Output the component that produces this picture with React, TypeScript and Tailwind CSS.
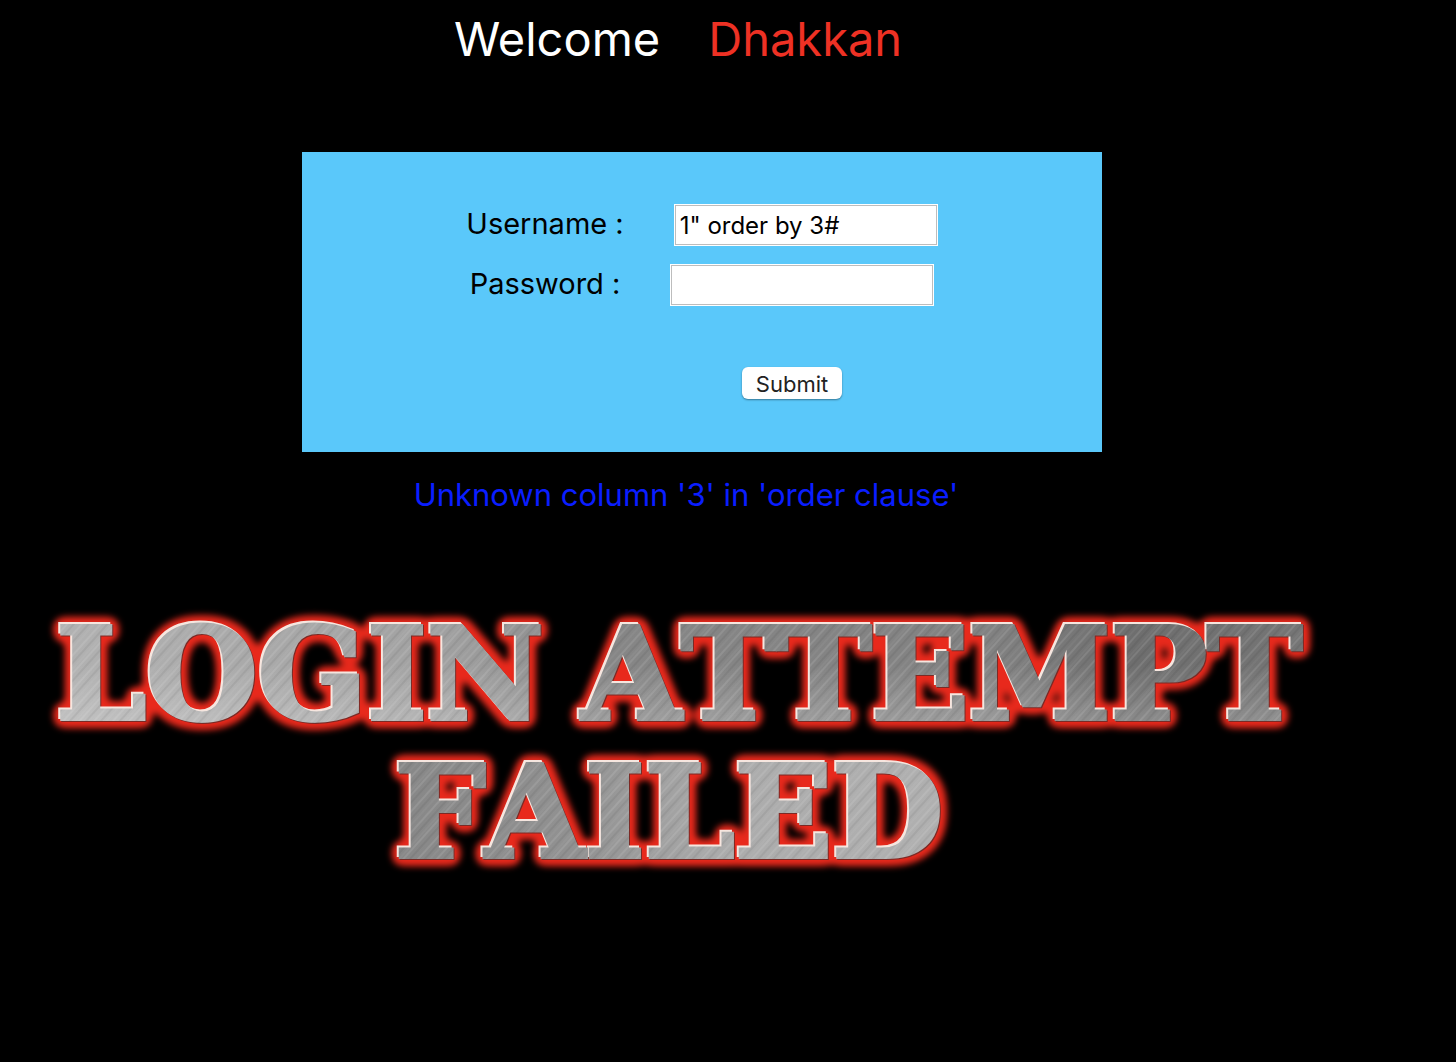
import React from "react";

function Field({ id, label, type, value }: { id: string; label: string; type: string; value: string }) {
  return (
    <div className="flex items-start justify-center gap-[50px]">
      <label htmlFor={id} className="text-[29px] leading-[40px] whitespace-pre">{label}</label>
      <input
        id={id}
        type={type}
        defaultValue={value}
        className="h-[42px] w-[264px] border border-white bg-white px-[5px] text-[24px] text-black outline outline-1 -outline-offset-2 outline-[#bdbdbd]"
      />
    </div>
  );
}

function FailedBanner() {
  return (
    <svg viewBox="0 -40 1456 340" className="block w-full" role="img" aria-label="Login attempt failed">
      <defs>
        <linearGradient id="steelTop" x1="0" x2="1" y1="0" y2="0">
          <stop offset="0" stopColor="#b4b4b4" />
          <stop offset="0.3" stopColor="#a2a2a2" />
          <stop offset="0.42" stopColor="#868686" />
          <stop offset="0.68" stopColor="#828282" />
          <stop offset="0.78" stopColor="#6e6e6e" />
          <stop offset="1" stopColor="#7c7c7c" />
        </linearGradient>
        <linearGradient id="steelBottom" x1="0" x2="1" y1="0" y2="0">
          <stop offset="0.26" stopColor="#868686" />
          <stop offset="0.4" stopColor="#929292" />
          <stop offset="0.5" stopColor="#acacac" />
          <stop offset="0.65" stopColor="#b0b0b0" />
        </linearGradient>
        <linearGradient id="sheen" x1="0" x2="0" y1="0" y2="1">
          <stop offset="0.4" stopColor="#fff" stopOpacity="0" />
          <stop offset="1" stopColor="#fff" stopOpacity="0.2" />
        </linearGradient>
        <pattern id="brush" width="37" height="60" patternUnits="userSpaceOnUse" patternTransform="rotate(42)">
          <path d="M3 0V60M17 0V60M29 0V60" stroke="#fff" strokeOpacity="0.1" strokeWidth="2" />
          <path d="M8 0V60M22 0V60M34 0V60" stroke="#000" strokeOpacity="0.06" strokeWidth="2" />
          <path d="M12 0V60M26 0V60" stroke="#fff" strokeOpacity="0.08" />
        </pattern>
        <pattern id="metal" width="1456" height="300" patternUnits="userSpaceOnUse">
          <rect width="1456" height="140" fill="url(#steelTop)" />
          <rect y="140" width="1456" height="160" fill="url(#steelBottom)" />
          <rect y="26" width="1456" height="96" fill="url(#sheen)" />
          <rect width="1456" height="300" fill="url(#brush)" />
        </pattern>
        <filter id="glow" x="0" y="0" width="1456" height="300" filterUnits="userSpaceOnUse" colorInterpolationFilters="sRGB">
          <feMorphology in="SourceAlpha" operator="dilate" radius="2" result="wide" />
          <feGaussianBlur in="wide" stdDeviation="5" result="soft" />
          <feComponentTransfer in="soft" result="fat">
            <feFuncA type="linear" slope="12" intercept="-1" />
          </feComponentTransfer>
          <feGaussianBlur in="fat" stdDeviation="3" result="halo" />
          <feFlood floodColor="#e8291c" />
          <feComposite in2="halo" operator="in" result="red" />
          <feOffset in="SourceAlpha" dx="-2" dy="-2" result="up" />
          <feFlood floodColor="#f6e6df" />
          <feComposite in2="up" operator="in" result="light" />
          <feOffset in="SourceAlpha" dx="1" dy="1" result="down" />
          <feFlood floodColor="#7c2a25" />
          <feComposite in2="down" operator="in" result="dark" />
          <feMerge>
            <feMergeNode in="red" />
            <feMergeNode in="dark" />
            <feMergeNode in="light" />
            <feMergeNode in="SourceGraphic" />
          </feMerge>
        </filter>
      </defs>
      <g
        filter="url(#glow)"
        fill="url(#metal)"
        stroke="url(#metal)"
        strokeWidth="4"
        fontFamily="'DejaVu Serif', serif"
        fontWeight="700"
        fontSize="128"
        textAnchor="middle"
        className="[font-kerning:none]"
      >
        <text x="300" y="119">LOGIN</text>
        <text x="942" y="119">ATTEMPT</text>
        <text x="669" y="257">FAILED</text>
      </g>
    </svg>
  );
}

export default function App() {
  return (
    <main className="min-h-screen bg-black pt-[8px] font-['Inter',sans-serif] text-black">
      <h1 className="flex justify-center gap-[48px] pr-[100px] text-[47px] leading-[62px] font-normal">
        <span className="text-white">Welcome</span>
        <span className="text-[#ee3124]">Dhakkan</span>
      </h1>
      <div className="mt-[82px] flex justify-center pr-[52px]">
        <form className="flex h-[300px] w-full max-w-[800px] flex-col bg-[#5ac8fa] pt-[52px]" onSubmit={(e) => e.preventDefault()}>
          <div className="flex flex-col gap-[18px]">
            <Field id="uname" label="Username :" type="text" value={'1" order by 3#'} />
            <Field id="passwd" label="Password :" type="password" value="" />
          </div>
          <div className="mt-[61px] flex justify-center pl-[180px]">
            <button type="submit" className="h-[32px] w-[100px] rounded-[6px] bg-white text-[22px] leading-[34px] text-[#222] shadow-[0_1px_2px_rgba(0,0,0,0.4)]">
              Submit
            </button>
          </div>
        </form>
      </div>
      <p className="mt-[22px] pr-[84px] text-center text-[31px] leading-[42px] text-[#0a1eff]">
        Unknown column '3' in 'order clause'
      </p>
      <div className="mt-[44px]">
        <FailedBanner />
      </div>
    </main>
  );
}
